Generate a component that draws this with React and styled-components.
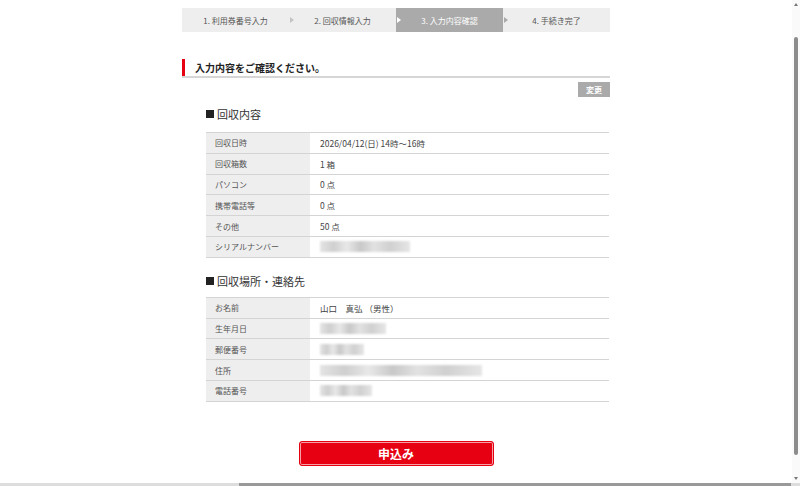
import React from "react";
import styled, { createGlobalStyle } from "styled-components";

const Global = createGlobalStyle`
  html, body { margin: 0; padding: 0; background: #fff; }
  body {
    font-family: "Noto Sans CJK JP", "Noto Sans", sans-serif;
    color: #333;
    overflow: hidden;
  }
`;

const Page = styled.div`
  width: 800px;
  height: 486px;
  position: relative;
  overflow: hidden;
`;

const Main = styled.div`
  width: 428px;
  margin: 0 auto 0 182px;
  padding-top: 8px;
  display: flex;
  flex-direction: column;
`;

const Steps = styled.ol`
  list-style: none;
  margin: 0;
  padding: 0;
  display: grid;
  grid-template-columns: repeat(4, 1fr);
  height: 24px;
  background: #eee;
`;

const Step = styled.li`
  position: relative;
  display: flex;
  align-items: center;
  justify-content: center;
  font-size: 8px;
  color: ${(p) => (p.$active ? "#fff" : "#555")};
  background: ${(p) => (p.$active ? "#aaa" : "#eee")};
  &::before {
    content: "";
    display: ${(p) => (p.$first ? "none" : "block")};
    position: absolute;
    left: 1px;
    top: 50%;
    margin-top: -3.5px;
    border-style: solid;
    border-width: 3.5px 0 3.5px 4px;
    border-color: transparent transparent transparent ${(p) => p.$arrow};
  }
`;

const Heading = styled.h2`
  margin: 27px 0 0;
  height: 17px;
  display: flex;
  align-items: center;
  padding-left: 10px;
  border-left: 3px solid #e60012;
  font-size: 10px;
  font-weight: bold;
  color: #222;
  position: relative;
  &::after {
    content: "";
    position: absolute;
    left: -3px;
    right: 0;
    bottom: -2px;
    height: 2px;
    background: #d6d6d6;
  }
`;

const EditRow = styled.div`
  display: flex;
  justify-content: flex-end;
  margin-top: 6px;
`;

const EditButton = styled.button`
  width: 32px;
  height: 15px;
  border: none;
  padding: 0;
  background: #aaa;
  color: #fff;
  font-family: inherit;
  font-size: 8px;
  font-weight: bold;
`;

const Section = styled.section`
  margin-left: 24px;
  margin-right: 1px;
  display: flex;
  flex-direction: column;
`;

const SectionTitle = styled.h3`
  margin: ${(p) => p.$mt}px 0 0;
  font-size: 11px;
  font-weight: normal;
  color: #333;
  display: flex;
  align-items: center;
  height: 16px;
  &::before {
    content: "";
    width: 8px;
    height: 8px;
    background: #222;
    margin-right: 3px;
  }
`;

const Table = styled.div`
  margin-top: ${(p) => p.$mt}px;
  border-top: 1px solid #d4d4d4;
`;

const Row = styled.div`
  display: grid;
  grid-template-columns: 104px 1fr;
  height: 19.8px;
  border-bottom: 1px solid #d4d4d4;
  font-size: 8px;
`;

const Label = styled.div`
  background: #eee;
  color: #555;
  display: flex;
  align-items: center;
  padding-left: 9px;
`;

const Value = styled.div`
  display: flex;
  align-items: center;
  padding-left: 10px;
  color: #444;
  font-size: 8.5px;
`;

const Blur = styled.span`
  display: inline-block;
  width: ${(p) => p.$w}px;
  height: 11px;
  background: linear-gradient(
    90deg,
    #e4e4e4 0%,
    #cfcfcf 15%,
    #e8e8e8 30%,
    #c8c8c8 45%,
    #e2e2e2 60%,
    #d0d0d0 78%,
    #e6e6e6 100%
  );
  filter: blur(1.2px);
`;

const SubmitWrap = styled.div`
  display: flex;
  justify-content: center;
  margin-top: 39px;
`;

const Submit = styled.button`
  width: 195px;
  height: 25px;
  border: 1px solid #e60012;
  border-radius: 3px;
  background: #e60012;
  box-shadow: inset 0 0 0 1px #f6a0a6;
  color: #fff;
  font-family: inherit;
  font-size: 12px;
  font-weight: bold;
  padding: 0;
`;

const VScroll = styled.div`
  position: absolute;
  top: 0;
  right: 0;
  width: 8px;
  height: 483px;
  background: #fafafa;
`;

const VThumb = styled.div`
  position: absolute;
  left: 2px;
  top: 37px;
  width: 4px;
  height: 418px;
  border-radius: 2px;
  background: #8c8c8c;
`;

const Arrow = styled.div`
  position: absolute;
  left: 1.5px;
  ${(p) => (p.$up ? "top: 3px;" : "bottom: 3px;")}
  border-style: solid;
  border-width: ${(p) => (p.$up ? "0 2.5px 3px 2.5px" : "3px 2.5px 0 2.5px")};
  border-color: ${(p) =>
    p.$up
      ? "transparent transparent #777 transparent"
      : "#777 transparent transparent transparent"};
`;

const HScroll = styled.div`
  position: absolute;
  left: 0;
  bottom: 0;
  width: 800px;
  height: 3px;
  background: #ddd;
`;

const HThumb = styled.div`
  position: absolute;
  left: 239px;
  top: 0;
  width: 552px;
  height: 3px;
  background: #999;
`;

const steps = ["1. 利用券番号入力", "2. 回収情報入力", "3. 入力内容確認", "4. 手続き完了"];
const active = 2;

const items1 = [
  ["回収日時", "2026/04/12(日) 14時～16時"],
  ["回収箱数", "1 箱"],
  ["パソコン", "0 点"],
  ["携帯電話等", "0 点"],
  ["その他", "50 点"],
  ["シリアルナンバー", { blur: 90 }],
];

const items2 = [
  ["お名前", "山口　真弘 （男性）"],
  ["生年月日", { blur: 66 }],
  ["郵便番号", { blur: 44 }],
  ["住所", { blur: 162 }],
  ["電話番号", { blur: 52 }],
];

function renderRows(items) {
  return items.map(([k, v]) => (
    <Row key={k}>
      <Label>{k}</Label>
      <Value>{typeof v === "string" ? v : <Blur $w={v.blur} />}</Value>
    </Row>
  ));
}

export default function App() {
  return (
    <Page>
      <Global />
      <Main>
        <Steps>
          {steps.map((s, i) => (
            <Step
              key={s}
              $active={i === active}
              $first={i === 0}
              $arrow={i === active ? "#fff" : i - 1 === active ? "#aaa" : "#c4c4c4"}
            >
              {s}
            </Step>
          ))}
        </Steps>
        <Heading>入力内容をご確認ください。</Heading>
        <EditRow>
          <EditButton>変更</EditButton>
        </EditRow>
        <Section>
          <SectionTitle $mt={9}>回収内容</SectionTitle>
          <Table $mt={10}>{renderRows(items1)}</Table>
          <SectionTitle $mt={15}>回収場所・連絡先</SectionTitle>
          <Table $mt={8}>{renderRows(items2)}</Table>
        </Section>
        <SubmitWrap>
          <Submit>申込み</Submit>
        </SubmitWrap>
      </Main>
      <VScroll>
        <Arrow $up />
        <VThumb />
        <Arrow />
      </VScroll>
      <HScroll>
        <HThumb />
      </HScroll>
    </Page>
  );
}
